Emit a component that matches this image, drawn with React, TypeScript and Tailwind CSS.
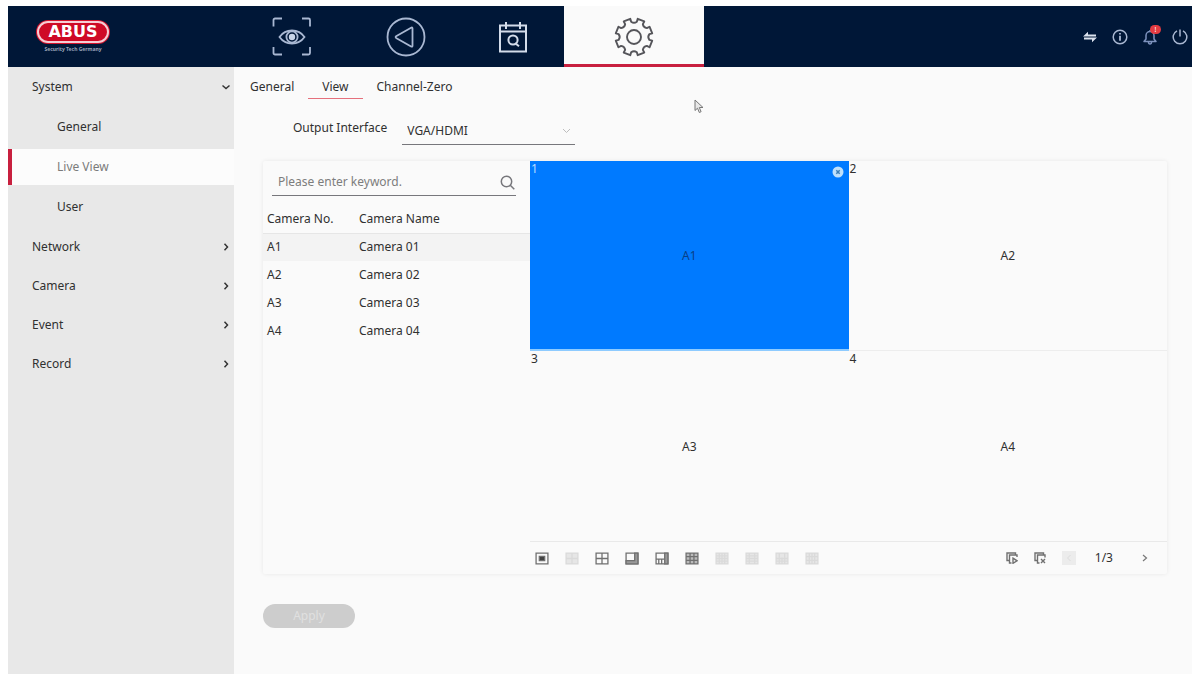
import type { ReactNode } from "react";

const cameras = [
  { no: "A1", name: "Camera 01" },
  { no: "A2", name: "Camera 02" },
  { no: "A3", name: "Camera 03" },
  { no: "A4", name: "Camera 04" },
];

function Logo() {
  return (
    <div className="flex w-[74px] flex-col items-center">
      <div className="w-full rounded-full bg-[#d3122c] p-px">
        <div className="flex h-[22px] items-center justify-center rounded-full border-2 border-[#f6cdd4] bg-[#cf0a26] font-['DejaVu_Sans','Liberation_Sans',sans-serif] text-[16px] leading-none font-black text-white">
          ABUS
        </div>
      </div>
      <span className="mt-px text-[5px] leading-[8px] font-bold whitespace-nowrap text-[#9ba5ba]">
        Security Tech Germany
      </span>
    </div>
  );
}

function EyeIcon() {
  return (
    <svg width="40" height="40" viewBox="0 0 40 40" fill="none" stroke="#a9b8d2" strokeWidth="1.8">
      <path d="M1.500 9.500V3a1.500 1.500 0 0 1 1.500-1.500H10M30 1.500h6.500A1.500 1.500 0 0 1 38 3v6.500M38 30v6a1.500 1.500 0 0 1-1.500 1.500H30M10 37.500H3A1.500 1.500 0 0 1 1.500 36v-6" />
      <path d="M7.500 20c3-4.300 7.500-6.500 12.500-6.500s9.500 2.200 12.500 6.500c-3 4.300-7.500 6.500-12.500 6.500S10.500 24.300 7.500 20z" />
      <circle cx="20" cy="20" r="5.600" />
      <circle cx="20" cy="20" r="3.200" fill="#c9d5e8" stroke="none" />
    </svg>
  );
}

function PlaybackIcon() {
  return (
    <svg width="40" height="40" viewBox="0 0 40 40" fill="none" stroke="#a9b8d2" strokeWidth="1.800" strokeLinejoin="round">
      <circle cx="20" cy="20" r="18.500" />
      <path d="M26.500 11.500v17.200q0 1.500-1.400.8L10.500 21.200q-1.800-1.200 0-2.200l14.600-8.300q1.400-.7 1.400.8z" />
    </svg>
  );
}

function CalendarSearchIcon() {
  return (
    <svg width="30" height="32" viewBox="0 0 30 32" fill="none" stroke="#d3dcea" strokeWidth="2">
      <path d="M2 4.500h26v26H2zM2 10.500h26M8 1v7M22 1v7" />
      <circle cx="15" cy="19" r="4.600" />
      <path d="M17 22l4 3.200" />
    </svg>
  );
}

function polar(radius: number, degrees: number) {
  const a = (degrees * Math.PI) / 180;
  return `${(20 + radius * Math.cos(a)).toFixed(2)} ${(20 + radius * Math.sin(a)).toFixed(2)}`;
}

const gearOutline =
  Array.from({ length: 8 }, (_, i) => {
    const mid = 22.5 + i * 45;
    const start = `${i === 0 ? "M" : "L"}${polar(15.6, mid - 12)}`;
    return `${start}L${polar(18.6, mid - 11)}L${polar(18.6, mid + 11)}L${polar(15.6, mid + 12)}Q${polar(13.2, mid + 22.5)} ${polar(15.6, mid + 33)}`;
  }).join("") + "Z";

function GearIcon() {
  return (
    <svg className="mt-1" width="40" height="40" viewBox="0 0 40 40" fill="none" stroke="#55555a" strokeWidth="1.900" strokeLinejoin="round">
      <circle cx="20" cy="20" r="7" />
      <path d={gearOutline} />
    </svg>
  );
}

function Chevron({ open = false }: { open?: boolean }) {
  return (
    <svg width="8" height="8" viewBox="0 0 8 8" fill="none" stroke="#333" strokeWidth="1.500">
      <path d={open ? "M.500 2.500L4 5.500l3.500-3" : "M2.500 .800L5.500 4l-3 3.200"} />
    </svg>
  );
}

function TopTab({ label, width, active, children }: { label: string; width: string; active?: boolean; children: ReactNode }) {
  return (
    <button
      type="button"
      aria-label={label}
      className={`${width} flex h-full items-center justify-center ${active ? "border-b-3 border-[#c8203f] bg-[#fafafa]" : ""}`}
    >
      {children}
    </button>
  );
}

function Header() {
  return (
    <header className="flex h-[61px] bg-[#001737]">
      <div className="flex w-[226px] items-center pl-7">
        <Logo />
      </div>
      <nav className="flex" aria-label="Main">
        <TopTab label="Live view" width="w-[116px]"><EyeIcon /></TopTab>
        <TopTab label="Playback" width="w-28"><PlaybackIcon /></TopTab>
        <TopTab label="File search" width="w-[102px]"><CalendarSearchIcon /></TopTab>
        <TopTab label="Configuration" width="w-[140px]" active><GearIcon /></TopTab>
      </nav>
      <div className="ml-auto flex items-center gap-3.5 pr-1">
        <button type="button" aria-label="Transfers">
          <svg width="16" height="16" viewBox="0 0 16 16" fill="#dce3ee">
            <path d="M1 7.400L6 2.800V5.400H14V7.400zM15 8.600L10 13.200V10.600H2V8.600z" />
          </svg>
        </button>
        <button type="button" aria-label="Information">
          <svg width="16" height="16" viewBox="0 0 16 16" fill="none" stroke="#a9b8d2" strokeWidth="1.500">
            <circle cx="8" cy="8" r="6.800" />
            <path d="M8 6.800v5M8 4v1.500" strokeWidth="1.800" />
          </svg>
        </button>
        <button type="button" aria-label="Alarms" className="relative">
          <svg width="16" height="18" viewBox="0 0 16 18" fill="none" stroke="#7d92bd" strokeWidth="1.500" strokeLinejoin="round">
            <path d="M2 13.500h12l-2-2.500V7.500a4 4 0 0 0-8 0V11zM6.500 14q0 2 1.500 2t1.500-2M8 3.500V2" />
          </svg>
          <span className="absolute -top-[3px] -right-[3px] flex h-[9px] w-[11px] items-center justify-center rounded-full bg-[#e23b41] text-[7px] leading-none text-white">
            !
          </span>
        </button>
        <button type="button" aria-label="Power">
          <svg width="16" height="16" viewBox="0 0 16 16" fill="none" stroke="#a9b8d2" strokeWidth="1.500">
            <path d="M5 1.800a6.800 6.800 0 1 0 6 0M8 .500v7" />
          </svg>
        </button>
      </div>
    </header>
  );
}

function Sidebar() {
  return (
    <nav aria-label="Settings" className="w-[226px] shrink-0 bg-[#e8e8e8]">
      <button type="button" className="flex h-10 w-full items-center justify-between pr-1 pl-6">
        System <Chevron open />
      </button>
      {["General", "Live View", "User"].map((item) => (
        <div key={item} className="h-10 py-[2px]">
          <a
            href="#"
            className={`flex h-full items-center ${item === "Live View" ? "border-l-4 border-[#c8203f] bg-[#fcfcfc] pl-[45px] text-[#7b7b7b]" : "pl-[49px]"}`}
          >
            {item}
          </a>
        </div>
      ))}
      {["Network", "Camera", "Event", "Record"].map((item) => (
        <button key={item} type="button" className="flex h-[39px] w-full items-center justify-between pr-1 pl-6">
          {item} <Chevron />
        </button>
      ))}
    </nav>
  );
}

function CameraList() {
  return (
    <div className="w-[267px] shrink-0">
      <div className="mr-[14px] ml-[9px] flex h-[35px] items-center border-b border-[#77777c] pt-2 pr-px pl-1.5">
        <input
          type="text"
          aria-label="Camera search"
          placeholder="Please enter keyword."
          className="min-w-0 flex-1 bg-transparent outline-none placeholder:text-[#7d7d7d]"
        />
        <svg width="15" height="15" viewBox="0 0 15 15" fill="none" stroke="#77777c" strokeWidth="1.500">
          <circle cx="6.500" cy="6.500" r="5.200" />
          <path d="M10.300 10.300l4 4" />
        </svg>
      </div>
      <table className="mt-[10px] w-full table-fixed border-collapse text-left">
        <thead>
          <tr className="h-[27px] border-b border-[#e6e6e6]">
            <th className="w-[96px] pl-1 font-normal whitespace-nowrap">Camera No.</th>
            <th className="font-normal">Camera Name</th>
          </tr>
        </thead>
        <tbody>
          {cameras.map((c, i) => (
            <tr key={c.no} className={`h-7 ${i === 0 ? "bg-[#f3f3f3]" : ""}`}>
              <td className="pl-1">{c.no}</td>
              <td>{c.name}</td>
            </tr>
          ))}
        </tbody>
      </table>
    </div>
  );
}

const layouts: { label: string; off?: boolean; art: ReactNode }[] = [
  { label: "1 window", art: <><path d="M1 1h11v10H1z" /><path d="M4 4h5v4H4z" fill="#444" /></> },
  { label: "2 windows", off: true, art: <path d="M1 1h11v10H1zM6.500 1v10M1 6h11" /> },
  { label: "4 windows", art: <path d="M1 1h11v10H1zM6.500 1v10M1 6h11" /> },
  { label: "6 windows", art: <><path d="M1 1h11v10H1z" /><path d="M9 1h3v10H1V8h8z" fill="#999" /></> },
  { label: "8 windows", art: <><path d="M1 1h11v10H1zM3.500 7v4M6.200 7v4M1 6.500h8" /><path d="M9 1h3v10H9z" fill="#999" /></> },
  { label: "9 windows", art: <><path d="M1 1h11v10H1z" fill="#bbb" /><path d="M4.700 1v10M8.300 1v10M1 4.300h11M1 7.700h11" /></> },
  { label: "16 windows", off: true, art: <path d="M1 1h11v10H1zM4 1v10M6.500 1v10M9 1v10M1 3.500h11M1 6h11M1 8.500h11" /> },
  { label: "25 windows", off: true, art: <path d="M1 1h11v10H1zM4 1v10M9 1v10M1 3.500h11M1 6h11M1 8.500h11" /> },
  { label: "32 windows", off: true, art: <path d="M1 1h11v10H1zM4 1v10M6.500 5v6M9 1v10M1 6h11M1 8.500h11" /> },
  { label: "36 windows", off: true, art: <path d="M1 1h11v10H1zM4 1v10M6.500 1v10M9 1v10M1 4.300h11M1 7.700h11" /> },
];

function Toolbar() {
  return (
    <div className="flex h-[33px] items-center border-t border-[#e9e9e9] pr-[18px] pl-[5px]">
      <div className="flex gap-4">
        {layouts.map((l) => (
          <button key={l.label} type="button" aria-label={l.label} disabled={l.off}>
            <svg
              width="14"
              height="13"
              viewBox="0 0 13 12"
              fill={l.off ? "#e6e6e6" : "none"}
              stroke={l.off ? "#dadada" : "#707070"}
              strokeWidth="1.200"
            >
              {l.art}
            </svg>
          </button>
        ))}
      </div>
      <div className="ml-auto flex items-center">
        <button type="button" aria-label="Start all live views">
          <svg width="12" height="12" viewBox="0 0 12 12" fill="none" stroke="#707070" strokeWidth="1.400">
            <path d="M3 8.500H1V1h8.500v2M5.500 11h-2V3H11v2" />
            <path d="M7 6.200L11 8.800l-4 2.500z" />
          </svg>
        </button>
        <button type="button" aria-label="Stop all live views" className="ml-4">
          <svg width="12" height="12" viewBox="0 0 12 12" fill="none" stroke="#707070" strokeWidth="1.400">
            <path d="M3 8.500H1V1h8.500v2M5.500 11h-2V3H11v2.500M7 7l4 4M11 7l-4 4" />
          </svg>
        </button>
        <button type="button" aria-label="Previous page" disabled className="ml-4">
          <svg width="14" height="14" viewBox="0 0 14 14" fill="none" stroke="#dcdcdc">
            <path d="M0 0h14v14H0z" fill="#ececec" stroke="none" />
            <path d="M8.500 4L5.500 7l3 3" />
          </svg>
        </button>
        <span className="ml-[19px]">1/3</span>
        <button type="button" aria-label="Next page" className="ml-7">
          <svg width="8" height="8" viewBox="0 0 8 8" fill="none" stroke="#777" strokeWidth="1.200">
            <path d="M2 1l3.500 3L2 7" />
          </svg>
        </button>
      </div>
    </div>
  );
}

function ViewGrid() {
  return (
    <div className="flex min-w-0 flex-1 flex-col">
      <div className="grid flex-1 grid-cols-2 grid-rows-[190px_190px]">
        {cameras.map((c, i) => (
          <div
            key={c.no}
            className={`relative flex items-center justify-center pt-px ${
              i === 0
                ? "border-b-2 border-[#8ecbff] bg-[#007aff]"
                : i === 1
                  ? "border-b border-[#ededed]"
                  : ""
            }`}
          >
            <span className={`absolute top-0 left-px leading-4 ${i === 0 ? "text-[#b8dcff]" : ""}`}>{i + 1}</span>
            {i === 0 && (
              <button type="button" aria-label="Clear window" className="absolute top-[5px] right-[5px]">
                <svg width="12" height="12" viewBox="0 0 12 12">
                  <circle cx="6" cy="6" r="5.500" fill="#bfe0fb" />
                  <path d="M4.300 4.300l3.400 3.400M7.700 4.300L4.300 7.700" stroke="#3f7fb5" strokeWidth="1.500" />
                </svg>
              </button>
            )}
            <span className={i === 0 ? "text-[#0a3f86]" : ""}>{c.no}</span>
          </div>
        ))}
      </div>
      <Toolbar />
    </div>
  );
}

export default function App() {
  return (
    <div className="flex min-h-screen flex-col bg-white pt-1.5 pr-px pb-[5px] pl-2 font-['Noto_Sans','Liberation_Sans',sans-serif] text-xs text-[#303030]">
      <Header />
      <div className="flex flex-1">
        <Sidebar />
        <main className="relative flex min-w-0 flex-1 flex-col items-start bg-[#fafafa]">
          <nav aria-label="View settings" className="flex h-8 items-stretch pl-0.5">
            <a href="#" className="flex items-center px-[14px] pt-2">General</a>
            <a href="#" className="flex items-center border-b border-[#e5707c] px-[14px] pt-2">View</a>
            <a href="#" className="flex items-center px-[14px] pt-2">Channel-Zero</a>
          </nav>
          <div className="mt-[18px] flex h-7 items-stretch pl-[59px]">
            <label htmlFor="output" className="pt-[3px] leading-4">Output Interface</label>
            <div className="relative ml-[15px] flex w-[173px] border-b border-[#77777c]">
              <select id="output" className="w-full appearance-none bg-transparent pl-[5px] outline-none">
                <option>VGA/HDMI</option>
              </select>
              <svg className="pointer-events-none absolute right-1 bottom-2.5" width="9" height="6" viewBox="0 0 9 6" fill="none" stroke="#bdbdbd">
                <path d="M1 1l3.500 3.500L8 1" />
              </svg>
            </div>
          </div>
          <section className="mt-4 mr-[25px] ml-[29px] flex self-stretch rounded-xs shadow-[0_0_4px_rgba(0,0,0,0.08)]">
            <CameraList />
            <ViewGrid />
          </section>
          <button
            type="button"
            disabled
            className="mt-[30px] ml-[29px] flex h-6 w-[92px] items-center justify-center rounded-full bg-[#cdcdcd] text-[#e0e0e0]"
          >
            Apply
          </button>
          <svg className="pointer-events-none absolute top-8 left-[460px]" width="10" height="15" viewBox="0 0 10 15" fill="#e8e8e8" stroke="#777">
            <path d="M1 1v10.500l2.500-2.300 1.800 4.300 1.800-.8-1.800-4.200H9z" />
          </svg>
        </main>
      </div>
    </div>
  );
}
